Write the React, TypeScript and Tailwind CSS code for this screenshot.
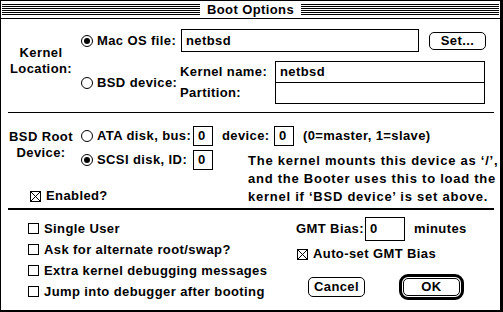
import type { ReactNode } from 'react'

function Radio({ on }: { on?: boolean }) {
  return (
    <span className="w-[12px] h-[12px] shrink-0 rounded-full border border-black flex items-center justify-center">
      {on && <span className="w-[6px] h-[6px] rounded-full bg-black" />}
    </span>
  )
}

function Check({ on }: { on?: boolean }) {
  return (
    <span className="w-[11px] h-[11px] shrink-0 border border-black flex">
      {on && (
        <svg width="9" height="9" viewBox="0 0 9 9" className="block">
          <path d="M0 0L9 9M9 0L0 9" stroke="black" strokeWidth="1" />
        </svg>
      )}
    </span>
  )
}

function Field({ className, children }: { className: string; children?: ReactNode }) {
  return <div className={`border border-black flex items-center pl-[4px] shrink-0 ${className}`}>{children}</div>
}

function Stripes() {
  return (
    <div className="flex-1 flex flex-col gap-px">
      <div className="h-px bg-black" />
      <div className="h-px bg-black" />
      <div className="h-px bg-black" />
      <div className="h-px bg-black" />
      <div className="h-px bg-black" />
      <div className="h-px bg-black" />
    </div>
  )
}

export default function App() {
  return (
    <div className="w-[503px] h-[312px] bg-white text-black border-l border-t border-r-[3px] border-b-[2px] border-black font-bold text-[13px] tracking-[0.4px] font-['Liberation_Sans',Arial,sans-serif] flex flex-col overflow-hidden">
      {/* title bar */}
      <div className="h-[18px] shrink-0 border-b border-black flex items-center px-px">
        <Stripes />
        <span className="px-[7px] leading-none">Boot Options</span>
        <Stripes />
      </div>

      {/* kernel location */}
      <div className="flex h-[93px] shrink-0">
        <div className="w-[80px] pt-[26px] text-center leading-[16px]">
          Kernel
          <br />
          Location:
        </div>
        <div className="pt-[10px]">
          <div className="flex items-center h-[23px]">
            <label className="w-[100px] flex items-center gap-[4px]">
              <Radio on />
              Mac OS file:
            </label>
            <Field className="w-[238px] h-[23px]">netbsd</Field>
            <button className="ml-[10px] w-[57px] h-[18px] border border-black rounded-[5px] flex items-center justify-center">
              Set...
            </button>
          </div>
          <div className="flex mt-[9px]">
            <label className="w-[99px] flex items-center gap-[4px]">
              <Radio />
              BSD device:
            </label>
            <div className="flex flex-col">
              <div className="flex items-center h-[22px]">
                <span className="w-[95px]">Kernel name:</span>
                <Field className="w-[210px] h-[22px]">netbsd</Field>
              </div>
              <div className="flex items-center h-[22px] -mt-px">
                <span className="w-[95px]">Partition:</span>
                <Field className="w-[210px] h-[22px]" />
              </div>
            </div>
          </div>
        </div>
      </div>

      <div className="ml-[7px] w-[486px] h-px bg-black shrink-0" />

      {/* bsd root device */}
      <div className="flex h-[95px] shrink-0">
        <div className="w-[80px] flex flex-col">
          <div className="pt-[16px] text-center leading-[16px]">
            BSD Root
            <br />
            Device:
          </div>
          <label className="mt-[27px] h-[16px] pl-[29px] flex items-center gap-[5px] whitespace-nowrap">
            <Check on />
            Enabled?
          </label>
        </div>
        <div className="flex flex-col pt-[13px]">
          <div className="flex items-center h-[20px]">
            <label className="w-[112px] flex items-center gap-[4px]">
              <Radio />
              ATA disk, bus:
            </label>
            <Field className="w-[20px] h-[20px]">0</Field>
            <span className="ml-[9px] w-[52px]">device:</span>
            <Field className="w-[20px] h-[20px]">0</Field>
            <span className="ml-[9px] whitespace-nowrap">(0=master, 1=slave)</span>
          </div>
          <div className="flex items-start mt-[4px]">
            <label className="w-[112px] h-[20px] flex items-center gap-[4px]">
              <Radio on />
              SCSI disk, ID:
            </label>
            <Field className="w-[20px] h-[20px]">0</Field>
            <p className="ml-[35px] mt-[2px] leading-[18px] tracking-[0.75px] whitespace-nowrap">
              The kernel mounts this device as ‘/’,
              <br />
              and the Booter uses this to load the
              <br />
              kernel if ‘BSD device’ is set above.
            </p>
          </div>
        </div>
      </div>

      <div className="ml-[7px] w-[486px] h-[2px] bg-black shrink-0" />

      {/* options */}
      <div className="flex flex-1">
        <div className="w-[295px] pt-[8px] pl-[27px] flex flex-col">
          {['Single User', 'Ask for alternate root/swap?', 'Extra kernel debugging messages', 'Jump into debugger after booting'].map((t) => (
            <label key={t} className="h-[21px] flex items-center gap-[5px] whitespace-nowrap">
              <Check />
              {t}
            </label>
          ))}
        </div>
        <div className="pt-[7px] flex flex-col">
          <div className="flex items-center h-[24px]">
            <span className="w-[69px]">GMT Bias:</span>
            <Field className="w-[40px] h-[24px]">0</Field>
            <span className="ml-[9px]">minutes</span>
          </div>
          <label className="mt-[5px] h-[16px] pl-px flex items-center gap-[5px] whitespace-nowrap">
            <Check on />
            Auto-set GMT Bias
          </label>
          <div className="mt-[12px] flex items-center">
            <button className="ml-[12px] w-[57px] h-[20px] border border-black rounded-[5px] flex items-center justify-center">
              Cancel
            </button>
            <div className="ml-[34px] w-[65px] h-[26px] border-[3px] border-black rounded-[9px] p-px">
              <button className="w-full h-full border border-black rounded-[5px] flex items-center justify-center">
                OK
              </button>
            </div>
          </div>
        </div>
      </div>
    </div>
  )
}
